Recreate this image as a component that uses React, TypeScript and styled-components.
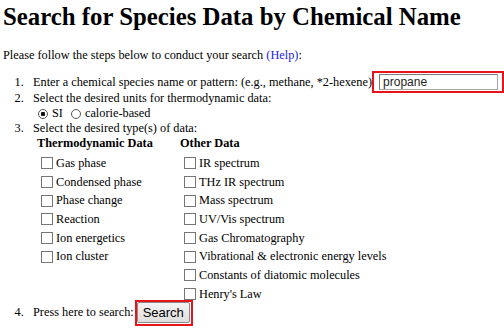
import styled, { createGlobalStyle } from "styled-components";

const GlobalStyle = createGlobalStyle`
  html, body {
    margin: 0;
    padding: 0;
    background: #ffffff;
  }
  body {
    font-family: "Liberation Serif", "Times New Roman", serif;
    color: #000000;
  }
`;

const Page = styled.div`
  padding: 0 1px 0 3px;
  width: 500px;
`;

const Title = styled.h1`
  margin: 0;
  padding-top: 2px;
  font-size: 24.8px;
  font-weight: bold;
  line-height: 30px;
  white-space: nowrap;
`;

const Intro = styled.p`
  margin: 16px 0 0;
  font-size: 12.3px;
  line-height: 15px;
`;

const HelpLink = styled.a`
  color: #2222ee;
  text-decoration: none;
`;

const Steps = styled.ol`
  margin: 10px 0 0;
  padding-left: 30px;
  font-size: 12.3px;
  line-height: 15px;
`;

const Step = styled.li<{ tall?: boolean }>`
  min-height: ${(p) => (p.tall ? "18px" : "15px")};
  &::marker {
    content: counter(list-item) ".\\00a0\\00a0\\00a0";
  }
`;

const StepLine = styled.div`
  display: flex;
  align-items: center;
  height: 18px;
  white-space: nowrap;
`;

const Highlight = styled.span`
  display: inline-flex;
  align-items: center;
  padding: 1px 4px 1px 5px;
  border: 2px solid #e8141c;
`;

const TextInput = styled.input`
  box-sizing: border-box;
  width: 119px;
  height: 16px;
  padding: 0 3px;
  border: 1px solid #7a7a7a;
  border-right-color: #a8a8a8;
  border-bottom-color: #a8a8a8;
  font-family: "Liberation Sans", Arial, sans-serif;
  font-size: 12px;
  color: #222;
  outline: none;
`;

const Options = styled.div`
  display: flex;
  align-items: center;
  height: 15px;
  padding-left: 5px;
`;

const Radio = styled.span<{ checked?: boolean }>`
  box-sizing: border-box;
  display: inline-block;
  width: 10px;
  height: 10px;
  border-radius: 50%;
  border: 1px solid #555;
  margin-right: 4px;
  background: ${(p) =>
    p.checked ? "radial-gradient(circle, #111 0 2px, #fff 2.5px)" : "#fff"};
`;

const OptionLabel = styled.span`
  margin-right: 8px;
`;

const DataGrid = styled.div`
  display: grid;
  grid-template-columns: 143px 1fr;
  padding-left: 4px;
`;

const Column = styled.div`
  display: flex;
  flex-direction: column;
`;

const ColumnHead = styled.div`
  font-weight: bold;
  line-height: 15px;
  height: 18px;
`;

const CheckRow = styled.label`
  display: flex;
  align-items: center;
  height: 18.7px;
  padding-left: 4px;
`;

const Box = styled.span`
  box-sizing: border-box;
  width: 12px;
  height: 12px;
  border: 1px solid #767676;
  background: #fff;
  margin-right: 3px;
  flex: none;
`;

const ButtonFrame = styled.span`
  display: inline-flex;
  margin-left: 1px;
  padding: 0 1px 1px 0;
  border: 2px solid #e8141c;
`;

const SearchButton = styled.button`
  box-sizing: border-box;
  width: 53px;
  height: 21px;
  padding: 0;
  border: 1px solid #8a8a8a;
  border-radius: 2px;
  background: linear-gradient(#f4f4f4, #dedede);
  font-family: "Liberation Sans", Arial, sans-serif;
  font-size: 13px;
  color: #000;
`;

const Rule = styled.hr`
  margin: 12px 0 0;
  border: none;
  border-top: 2px solid #a0a0a0;
  height: 0;
`;

const thermo = [
  "Gas phase",
  "Condensed phase",
  "Phase change",
  "Reaction",
  "Ion energetics",
  "Ion cluster",
];

const other = [
  "IR spectrum",
  "THz IR spectrum",
  "Mass spectrum",
  "UV/Vis spectrum",
  "Gas Chromatography",
  "Vibrational & electronic energy levels",
  "Constants of diatomic molecules",
  "Henry's Law",
];

function App() {
  return (
    <Page>
      <GlobalStyle />
      <Title>Search for Species Data by Chemical Name</Title>
      <Intro>
        Please follow the steps below to conduct your search{" "}
        <HelpLink href="#">(Help)</HelpLink>:
      </Intro>
      <Steps>
        <Step tall>
          <StepLine>
            Enter a chemical species name or pattern: (e.g., methane, *2-hexene)
            <Highlight>
              <TextInput defaultValue="propane" />
            </Highlight>
          </StepLine>
        </Step>
        <Step>
          Select the desired units for thermodynamic data:
          <Options>
            <Radio checked />
            <OptionLabel>SI</OptionLabel>
            <Radio />
            <OptionLabel>calorie-based</OptionLabel>
          </Options>
        </Step>
        <Step>
          Select the desired type(s) of data:
          <DataGrid>
            <Column>
              <ColumnHead>Thermodynamic Data</ColumnHead>
              {thermo.map((t) => (
                <CheckRow key={t}>
                  <Box />
                  {t}
                </CheckRow>
              ))}
            </Column>
            <Column>
              <ColumnHead>Other Data</ColumnHead>
              {other.map((t) => (
                <CheckRow key={t}>
                  <Box />
                  {t}
                </CheckRow>
              ))}
            </Column>
          </DataGrid>
        </Step>
        <Step tall>
          <StepLine>
            Press here to search:
            <ButtonFrame>
              <SearchButton>Search</SearchButton>
            </ButtonFrame>
          </StepLine>
        </Step>
      </Steps>
      <Rule />
    </Page>
  );
}

export default App;
